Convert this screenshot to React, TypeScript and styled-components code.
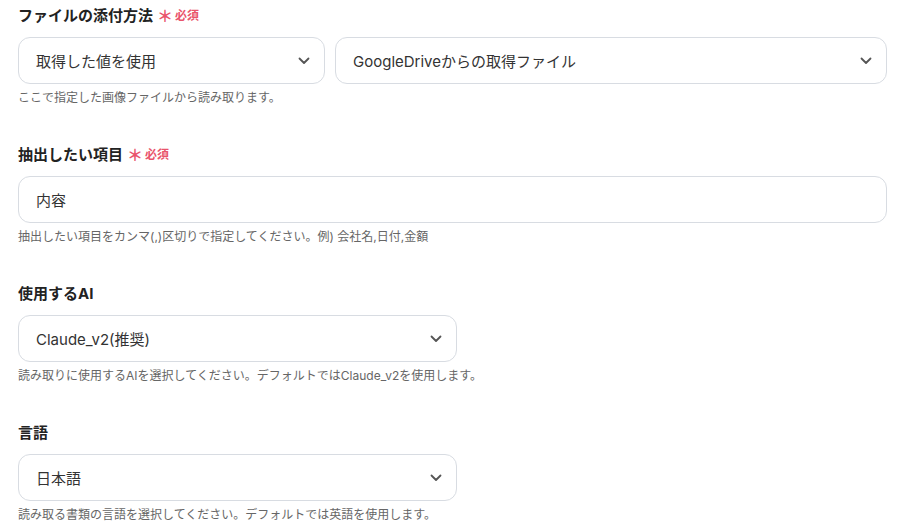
import React from "react";
import styled, { createGlobalStyle } from "styled-components";

const GlobalStyle = createGlobalStyle`
  body {
    margin: 0;
    background: #ffffff;
    font-family: Inter, "Noto Sans CJK JP", sans-serif;
    color: #333333;
  }
`;

const Page = styled.div`
  padding: 6px 15px 0 18px;
  display: flex;
  flex-direction: column;
  gap: 38px;
`;

const Field = styled.div`
  display: flex;
  flex-direction: column;
`;

const Label = styled.div`
  font-size: 15px;
  font-weight: 700;
  line-height: 20px;
  color: #222222;
  display: flex;
  align-items: center;
  margin-bottom: 11px;
`;

const Required = styled.span`
  color: #e9546b;
  font-size: 12px;
  font-weight: 700;
  margin-left: 4px;
  display: inline-flex;
  align-items: center;
  gap: 2px;
`;

const Asterisk = styled.span`
  font-size: 16px;
  line-height: 1;
`;

const Row = styled.div`
  display: flex;
  gap: 10px;
`;

const Box = styled.div<{ $width?: number; $grow?: boolean }>`
  box-sizing: border-box;
  height: 47px;
  border: 1px solid #d8dce2;
  border-radius: 12px;
  display: flex;
  align-items: center;
  justify-content: space-between;
  padding: 0 14px 0 17px;
  font-size: 15px;
  color: #333333;
  background: #ffffff;
  flex: ${(p) => (p.$grow ? "1" : "none")};
  ${(p) => (p.$width ? `width: ${p.$width}px;` : "")}
`;

const Help = styled.div`
  font-size: 12px;
  line-height: 18px;
  color: #666666;
  margin-top: 5px;
`;

const Chevron = () => (
  <svg width="12" height="8" viewBox="0 0 12 8" fill="none">
    <path d="M1.5 1.5 L6 6 L10.5 1.5" stroke="#555555" strokeWidth="1.8" strokeLinecap="round" strokeLinejoin="round" />
  </svg>
);

const Select = ({ value, width, grow }: { value: string; width?: number; grow?: boolean }) => (
  <Box $width={width} $grow={grow}>
    <span>{value}</span>
    <Chevron />
  </Box>
);

const RequiredMark = () => (
  <Required>
    <Asterisk>＊</Asterisk>必須
  </Required>
);

export default function App() {
  return (
    <>
      <GlobalStyle />
      <Page>
        <Field>
          <Label>
            ファイルの添付方法
            <RequiredMark />
          </Label>
          <Row>
            <Select value="取得した値を使用" width={307} />
            <Select value="GoogleDriveからの取得ファイル" grow />
          </Row>
          <Help>ここで指定した画像ファイルから読み取ります。</Help>
        </Field>
        <Field>
          <Label>
            抽出したい項目
            <RequiredMark />
          </Label>
          <Box>
            <span>内容</span>
          </Box>
          <Help>抽出したい項目をカンマ(,)区切りで指定してください。例) 会社名,日付,金額</Help>
        </Field>
        <Field>
          <Label>使用するAI</Label>
          <Select value="Claude_v2(推奨)" width={439} />
          <Help>読み取りに使用するAIを選択してください。デフォルトではClaude_v2を使用します。</Help>
        </Field>
        <Field>
          <Label>言語</Label>
          <Select value="日本語" width={439} />
          <Help>読み取る書類の言語を選択してください。デフォルトでは英語を使用します。</Help>
        </Field>
      </Page>
    </>
  );
}
